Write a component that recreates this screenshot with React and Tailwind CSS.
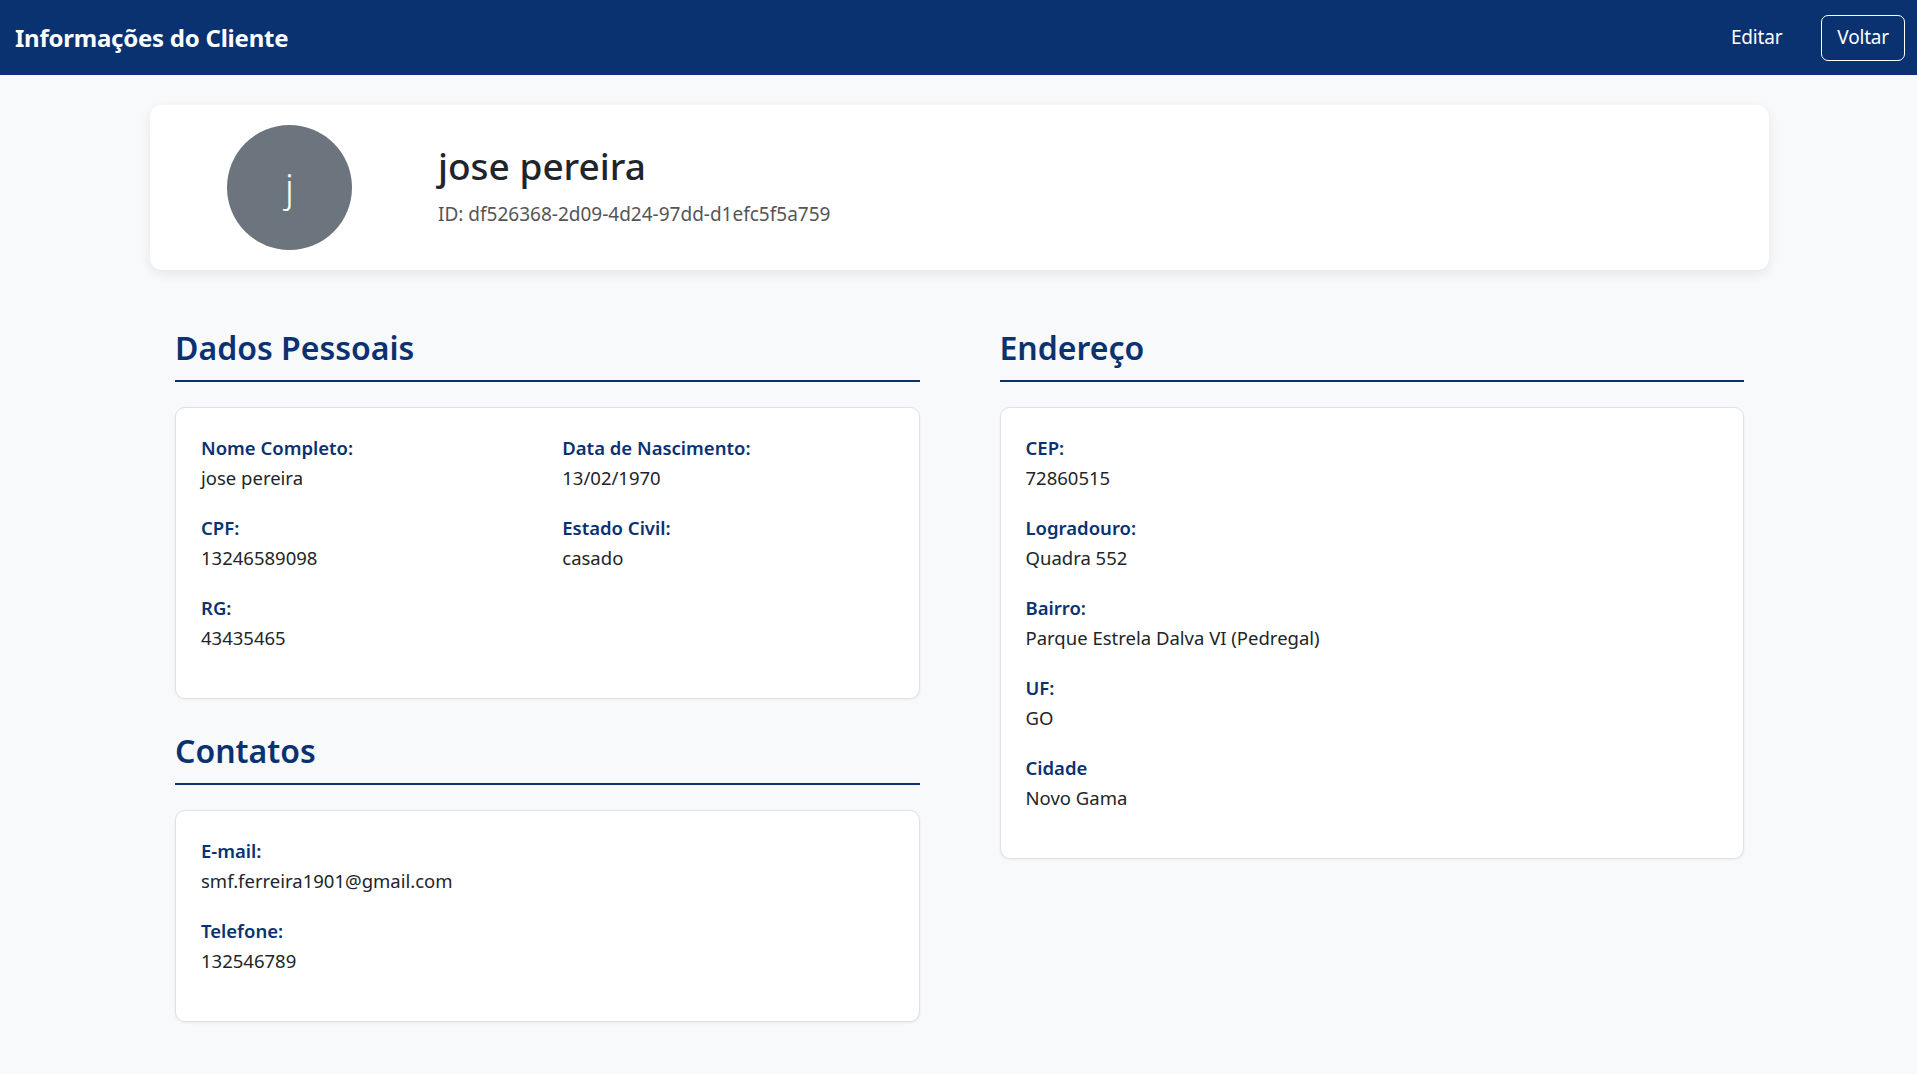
import React from "react";

const client = {
  id: "df526368-2d09-4d24-97dd-d1efc5f5a759",
  nome: "jose pereira",
  nascimento: "13/02/1970",
  cpf: "13246589098",
  estadoCivil: "casado",
  rg: "43435465",
  email: "smf.ferreira1901@gmail.com",
  telefone: "132546789",
  cep: "72860515",
  logradouro: "Quadra 552",
  bairro: "Parque Estrela Dalva VI (Pedregal)",
  uf: "GO",
  cidade: "Novo Gama",
};

function Field({ label, value }) {
  return (
    <div className="mb-5">
      <div className="text-[18.5px] leading-[30px] font-semibold text-[#0a3271]">{label}</div>
      <div className="text-[18.5px] leading-[30px] text-[#212529]">{value}</div>
    </div>
  );
}

function Section({ title, children }) {
  return (
    <section>
      <h2 className="text-[32px] leading-[34px] font-semibold text-[#0a3271] pb-[15px] border-b-2 border-[#0a3271] mb-[25px]">
        {title}
      </h2>
      <div className="bg-white border border-[#dee2e6] rounded-[10px] shadow-[0_1px_3px_rgba(0,0,0,0.06)] p-[25px]">
        {children}
      </div>
    </section>
  );
}

export default function App() {
  return (
    <div className="min-h-screen bg-[#f8f9fa] font-['Noto_Sans',sans-serif]">
      {/* Header */}
      <header className="h-[75px] bg-[#0a3271] flex items-center justify-between pl-[15px] pr-[12px]">
        <h1 className="text-[24px] font-bold text-white tracking-[-0.01em]">Informações do Cliente</h1>
        <div className="flex items-center gap-[39px]">
          <button className="text-[19px] text-white tracking-[-0.01em]">Editar</button>
          <button className="h-[46px] px-[15px] text-[19px] text-white tracking-[-0.01em] border border-white rounded-[7px]">
            Voltar
          </button>
        </div>
      </header>

      <main className="pl-[150px] pr-[148px] pt-[30px] pb-[40px]">
        {/* Perfil */}
        <div className="bg-white rounded-[12px] shadow-[0_4px_12px_rgba(0,0,0,0.08)] flex items-center h-[165px] pl-[77px] mb-[61px]">
          <div className="w-[125px] h-[125px] rounded-full bg-[#6c757d] flex items-center justify-center text-[38px] font-light text-white">
            j
          </div>
          <div className="ml-[86px] pb-[3px]">
            <div className="text-[37px] leading-[44px] font-medium text-[#212529]">{client.nome}</div>
            <div className="text-[19px] leading-[28px] text-[#555] mt-[12px]">ID: {client.id}</div>
          </div>
        </div>

        {/* Colunas */}
        <div className="grid grid-cols-2 gap-x-[80px] px-[25px]">
          <div className="flex flex-col gap-[35px]">
            <Section title="Dados Pessoais">
              <div className="grid grid-cols-2 gap-x-[30px]">
                <Field label="Nome Completo:" value={client.nome} />
                <Field label="Data de Nascimento:" value={client.nascimento} />
                <Field label="CPF:" value={client.cpf} />
                <Field label="Estado Civil:" value={client.estadoCivil} />
                <Field label="RG:" value={client.rg} />
              </div>
            </Section>
            <Section title="Contatos">
              <Field label="E-mail:" value={client.email} />
              <Field label="Telefone:" value={client.telefone} />
            </Section>
          </div>

          <div>
            <Section title="Endereço">
              <Field label="CEP:" value={client.cep} />
              <Field label="Logradouro:" value={client.logradouro} />
              <Field label="Bairro:" value={client.bairro} />
              <Field label="UF:" value={client.uf} />
              <Field label="Cidade" value={client.cidade} />
            </Section>
          </div>
        </div>
      </main>
    </div>
  );
}
